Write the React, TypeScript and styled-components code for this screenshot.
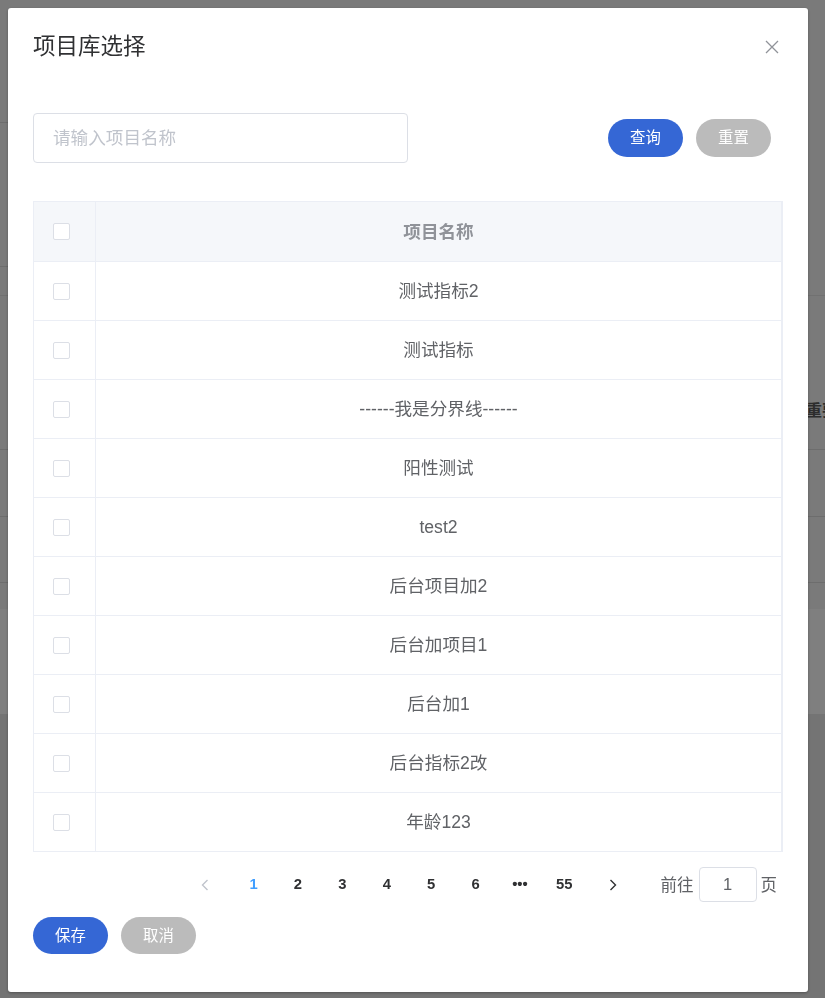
import React from 'react';
import styled, { createGlobalStyle } from 'styled-components';

const GlobalStyle = createGlobalStyle`
  html, body { margin: 0; padding: 0; }
  body {
    font-family: "Liberation Sans", "Noto Sans CJK SC", sans-serif;
    background: #fff;
    overflow: hidden;
  }
  * { box-sizing: border-box; }
`;

const Page = styled.div`
  width: 825px;
  height: 998px;
  display: flex;
  flex-direction: column;
  background: #e8e8e8;
`;

const Band = styled.div<{ $h: number; $bg: string; $line?: string; $lineW?: string }>`
  height: ${p => p.$h}px;
  flex: none;
  display: flex;
  align-items: flex-start;
  background: ${p =>
    p.$line
      ? `linear-gradient(${p.$line}, ${p.$line}) left bottom / ${p.$lineW || '100%'} 1px no-repeat, ${p.$bg}`
      : p.$bg};
`;

const BgLabel = styled.span`
  padding-left: 806px;
  margin-top: 105px;
  white-space: nowrap;
  font-size: 16px;
  line-height: 20px;
  font-weight: bold;
  color: #5a5a5a;
`;

const Overlay = styled.div`
  position: fixed;
  inset: 0;
  background: rgba(0, 0, 0, 0.5);
  display: flex;
  align-items: flex-start;
  padding: 8px;
`;

const Modal = styled.div`
  width: 800px;
  height: 984px;
  background: #fff;
  border-radius: 3px;
  box-shadow: 0 1px 3px rgba(0, 0, 0, 0.3);
  display: flex;
  flex-direction: column;
  padding: 27px 25px 0;
`;

const Header = styled.div`
  display: flex;
  align-items: center;
  justify-content: space-between;
  height: 24px;
`;

const Title = styled.h2`
  margin: 0;
  font-size: 22.5px;
  line-height: 24px;
  font-weight: normal;
  color: #303133;
`;

const CloseBtn = styled.button`
  border: 0;
  background: none;
  padding: 0;
  margin-right: 4px;
  width: 14px;
  height: 14px;
  display: flex;
  cursor: pointer;
`;

const SearchRow = styled.div`
  margin-top: 54px;
  display: flex;
  align-items: center;
  padding-right: 12px;
`;

const SearchInput = styled.input`
  width: 375px;
  height: 50px;
  border: 1px solid #dcdfe6;
  border-radius: 4px;
  padding: 0 19px;
  font-family: inherit;
  font-size: 17.6px;
  color: #606266;
  outline: none;
  &::placeholder { color: #c0c4cc; }
`;

const Spacer = styled.div`
  flex: 1;
`;

const PillButton = styled.button<{ $primary?: boolean }>`
  width: 75px;
  height: 38px;
  border: 0;
  border-radius: 20px;
  padding: 0;
  background: ${p => (p.$primary ? '#3567d5' : '#bbbbbb')};
  color: #fff;
  font-family: inherit;
  font-size: 15.4px;
  line-height: 1;
  font-weight: 400;
  cursor: pointer;
  & + & { margin-left: 13px; }
`;

const Table = styled.div`
  margin-top: 38px;
  border: 1px solid #ebeef5;
  border-right-width: 2px;
  display: flex;
  flex-direction: column;
`;

const Row = styled.div<{ $head?: boolean }>`
  display: grid;
  grid-template-columns: 62px 1fr;
  height: 59px;
  background: ${p => (p.$head ? '#f5f7fa' : '#fff')};
  & + & { border-top: 1px solid #ebeef5; }
`;

const CheckCell = styled.div`
  display: flex;
  align-items: center;
  padding-left: 19px;
  border-right: 1px solid #ebeef5;
`;

const Checkbox = styled.span`
  width: 17px;
  height: 17px;
  border: 1px solid #dcdfe6;
  border-radius: 2px;
  background: #fff;
`;

const NameCell = styled.div<{ $head?: boolean }>`
  display: flex;
  align-items: center;
  justify-content: center;
  padding-top: 2px;
  font-size: 17.6px;
  line-height: 1;
  font-weight: ${p => (p.$head ? 'bold' : 'normal')};
  color: ${p => (p.$head ? '#909399' : '#606266')};
`;

const Pagination = styled.div`
  margin-top: 15px;
  height: 35px;
  display: flex;
  align-items: center;
  justify-content: flex-end;
  padding-right: 6px;
  color: #303133;
`;

const ArrowBtn = styled.button<{ $disabled?: boolean; $side: 'prev' | 'next' }>`
  width: 40px;
  height: 35px;
  border: 0;
  background: none;
  padding: 0;
  display: flex;
  align-items: center;
  justify-content: center;
  margin: ${p => (p.$side === 'prev' ? '0 6px 0 0' : '0 0 0 6px')};
  color: ${p => (p.$disabled ? '#c0c4cc' : '#303133')};
`;

const Pager = styled.ul`
  list-style: none;
  margin: 0;
  padding: 0;
  display: flex;
`;

const PageItem = styled.li<{ $active?: boolean }>`
  width: 44.4px;
  height: 35px;
  display: flex;
  align-items: center;
  justify-content: center;
  padding-bottom: 1px;
  font-size: 14.8px;
  line-height: 1;
  font-weight: bold;
  color: ${p => (p.$active ? '#409eff' : '#303133')};
`;

const Jumper = styled.div`
  margin-left: 28px;
  display: flex;
  align-items: center;
  font-size: 16.5px;
  line-height: 1;
  color: #606266;
`;

const JumpText = styled.span`
  padding-top: 1px;
`;

const JumpInput = styled.input`
  width: 58px;
  height: 35px;
  margin: 0 4px 0 5px;
  padding: 0 0 1px;
  border: 1px solid #dcdfe6;
  border-radius: 4px;
  text-align: center;
  font-family: inherit;
  font-size: 16.5px;
  color: #606266;
  outline: none;
`;

const Footer = styled.div`
  margin-top: 15px;
  display: flex;
  & > button { height: 37px; }
`;

const items = [
  '测试指标2',
  '测试指标',
  '------我是分界线------',
  '阳性测试',
  'test2',
  '后台项目加2',
  '后台加项目1',
  '后台加1',
  '后台指标2改',
  '年龄123',
];

const pages = ['1', '2', '3', '4', '5', '6', '•••', '55'];

const Chevron = ({ dir }: { dir: 'left' | 'right' }) => (
  <svg width="8" height="12" viewBox="0 0 8 12" fill="none">
    <path
      d={dir === 'left' ? 'M6.5 1 L1.5 6 L6.5 11' : 'M1.5 1 L6.5 6 L1.5 11'}
      stroke="currentColor"
      strokeWidth="1.4"
    />
  </svg>
);

export default function App() {
  return (
    <>
      <GlobalStyle />
      <Page>
        <Band $h={123} $bg="#f5f5f5" $line="#dadada" $lineW="300px" />
        <Band $h={144} $bg="#f5f5f5" $line="#dadada" $lineW="300px" />
        <Band $h={29} $bg="#f5f5f5" $line="#e2e2e2" />
        <Band $h={154} $bg="#f5f5f5" $line="#dadada">
          <BgLabel>重要</BgLabel>
        </Band>
        <Band $h={67} $bg="#f5f5f5" $line="#dadada" />
        <Band $h={66} $bg="#f5f5f5" $line="#dadada" />
        <Band $h={26} $bg="#f5f5f5" />
        <Band $h={105} $bg="#ffffff" />
      </Page>
      <Overlay>
        <Modal>
          <Header>
            <Title>项目库选择</Title>
            <CloseBtn aria-label="close">
              <svg width="14" height="14" viewBox="0 0 14 14">
                <path d="M1 1 L13 13 M13 1 L1 13" stroke="#909399" strokeWidth="1.3" />
              </svg>
            </CloseBtn>
          </Header>
          <SearchRow>
            <SearchInput placeholder="请输入项目名称" />
            <Spacer />
            <PillButton $primary>查询</PillButton>
            <PillButton>重置</PillButton>
          </SearchRow>
          <Table>
            <Row $head>
              <CheckCell>
                <Checkbox />
              </CheckCell>
              <NameCell $head>项目名称</NameCell>
            </Row>
            {items.map(name => (
              <Row key={name}>
                <CheckCell>
                  <Checkbox />
                </CheckCell>
                <NameCell>{name}</NameCell>
              </Row>
            ))}
          </Table>
          <Pagination>
            <ArrowBtn $side="prev" $disabled>
              <Chevron dir="left" />
            </ArrowBtn>
            <Pager>
              {pages.map(p => (
                <PageItem key={p} $active={p === '1'}>
                  {p}
                </PageItem>
              ))}
            </Pager>
            <ArrowBtn $side="next">
              <Chevron dir="right" />
            </ArrowBtn>
            <Jumper>
              <JumpText>前往</JumpText>
              <JumpInput defaultValue="1" />
              <JumpText>页</JumpText>
            </Jumper>
          </Pagination>
          <Footer>
            <PillButton $primary>保存</PillButton>
            <PillButton>取消</PillButton>
          </Footer>
        </Modal>
      </Overlay>
    </>
  );
}
